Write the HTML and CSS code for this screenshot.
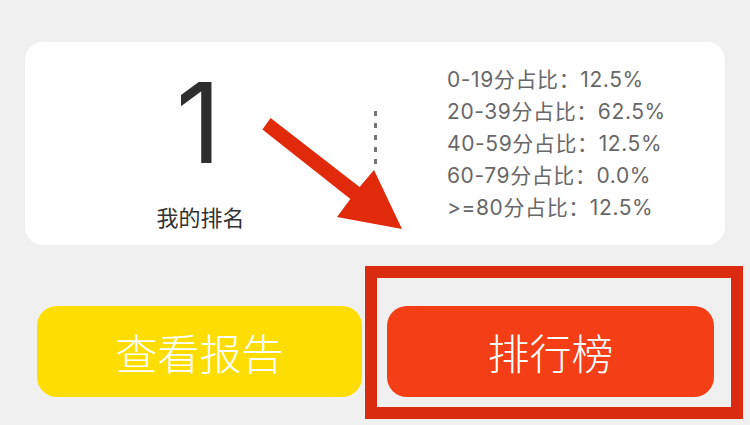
FILE: index.html
```html
<!DOCTYPE html>
<html lang="zh-CN">
<head>
<meta charset="utf-8">
<title>我的排名</title>
<link rel="stylesheet" href="styles.css">
</head>
<body>
<div class="page">
  <div class="card">
    <div class="rank">
      <div class="rank-num">1</div>
      <div class="rank-label">我的排名</div>
    </div>
    <div class="divider"></div>
    <ul class="dist">
      <li>0-19分占比：12.5%</li>
      <li>20-39分占比：62.5%</li>
      <li>40-59分占比：12.5%</li>
      <li>60-79分占比：0.0%</li>
      <li>&gt;=80分占比：12.5%</li>
    </ul>
  </div>
  <div class="actions">
    <button class="btn btn-report">查看报告</button>
    <button class="btn btn-rank">排行榜</button>
  </div>
  <svg class="arrow" width="750" height="425" viewBox="0 0 750 425">
    <polygon points="270.6,118 359.6,187 374,170 402,229 337,217 350.4,199 262.4,129.5" fill="#e12a0c"/>
  </svg>
  <div class="highlight"></div>
</div>
</body>
</html>
```

FILE: styles.css
```css
html, body {
  margin: 0;
  padding: 0;
}
body {
  background: #f0f0f0;
  font-family: "Inter", "Noto Sans CJK SC", sans-serif;
}
.page {
  position: relative;
  width: 750px;
  height: 425px;
  overflow: hidden;
}
.card {
  display: flex;
  margin: 42px 25px 0;
  height: 203px;
  background: #ffffff;
  border-radius: 18px;
}
.rank {
  width: 347px;
  display: flex;
  flex-direction: column;
  align-items: center;
  padding-top: 23px;
  box-sizing: border-box;
}
.rank-num {
  font-size: 112px;
  line-height: 115px;
  color: #2e2e2e;
}
.rank-label {
  margin-top: 23px;
  margin-left: 4px;
  font-size: 22px;
  line-height: 30px;
  color: #333333;
}
.divider {
  width: 3px;
  height: 54px;
  margin-top: 69px;
  margin-left: 2px;
  background: repeating-linear-gradient(to bottom, #737373 0, #737373 5px, transparent 5px, transparent 12px);
}
.dist {
  list-style: none;
  margin: 0;
  padding: 22px 0 0 70px;
  font-size: 21px;
  line-height: 32px;
  letter-spacing: 0.6px;
  color: #686868;
}
.actions {
  display: flex;
  gap: 25px;
  margin-top: 61px;
  padding-left: 37px;
}
.btn {
  height: 91px;
  border: none;
  border-radius: 20px;
  font-family: "Noto Sans CJK SC", sans-serif;
  font-size: 42px;
  font-weight: 300;
  color: #ffffff;
  padding: 0;
}
.btn-report {
  width: 325px;
  background: #fedd03;
}
.btn-rank {
  width: 327px;
  background: #f43e15;
}
.arrow {
  position: absolute;
  left: 0;
  top: 0;
}
.highlight {
  position: absolute;
  left: 365px;
  top: 266px;
  width: 378px;
  height: 153px;
  box-sizing: border-box;
  border: 12px solid #da2a10;
}
```
